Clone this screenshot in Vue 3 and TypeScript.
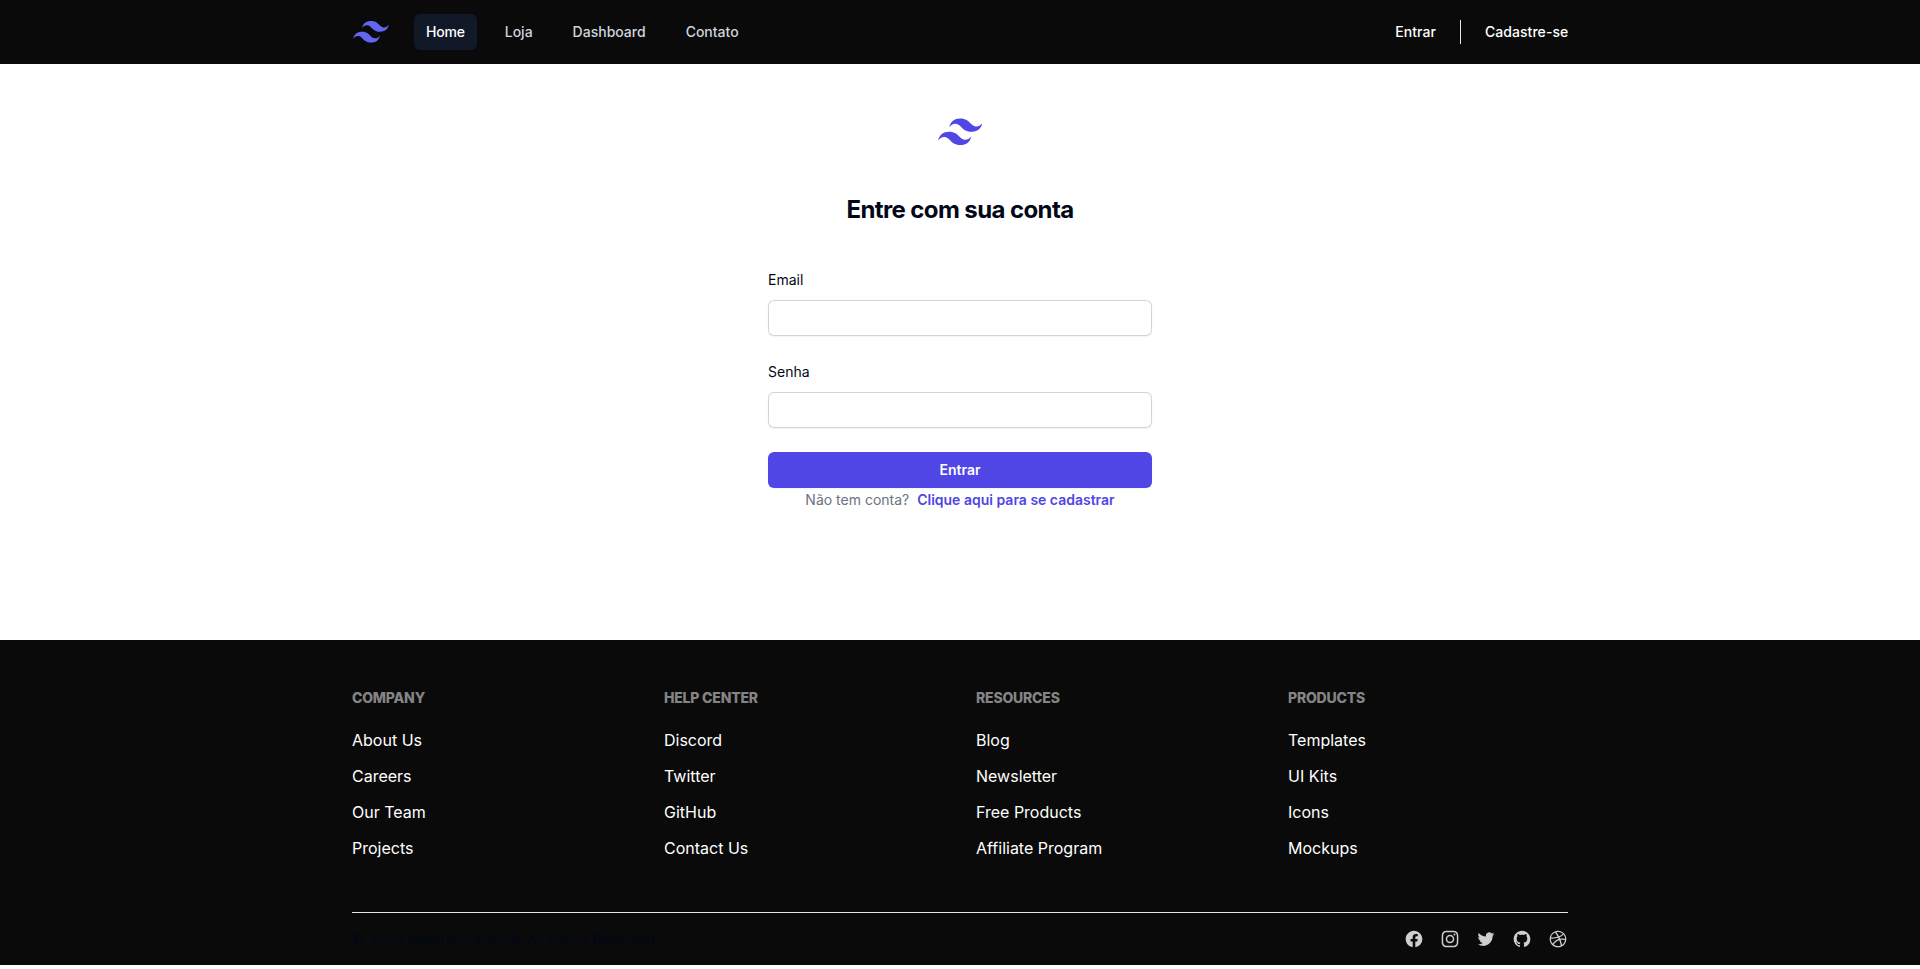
<script setup lang="ts">
interface NavItem { label: string; active?: boolean }
interface LinkGroup { title: string; items: string[] }
interface SocialIcon { name: string; path: string }

const navigation: NavItem[] = [
  { label: 'Home', active: true },
  { label: 'Loja' },
  { label: 'Dashboard' },
  { label: 'Contato' },
]

const groups: LinkGroup[] = [
  { title: 'Company', items: ['About Us', 'Careers', 'Our Team', 'Projects'] },
  { title: 'Help Center', items: ['Discord', 'Twitter', 'GitHub', 'Contact Us'] },
  { title: 'Resources', items: ['Blog', 'Newsletter', 'Free Products', 'Affiliate Program'] },
  { title: 'Products', items: ['Templates', 'UI Kits', 'Icons', 'Mockups'] },
]

const logoPath =
  'M27 0c-7.2 0-11.7 3.6-13.5 10.8 2.7-3.6 5.85-4.95 9.45-4.05 2.054.513 3.522 2.004 5.147 3.653C30.744 13.09 33.808 16.2 40.5 16.2c7.2 0 11.7-3.6 13.5-10.8-2.7 3.6-5.85 4.95-9.45 4.05-2.054-.513-3.522-2.004-5.147-3.653C36.756 3.11 33.692 0 27 0zM13.5 16.2C6.3 16.2 1.8 19.8 0 27c2.7-3.6 5.85-4.95 9.45-4.05 2.054.514 3.522 2.004 5.147 3.653C17.244 29.29 20.308 32.4 27 32.4c7.2 0 11.7-3.6 13.5-10.8-2.7 3.6-5.85 4.95-9.45 4.05-2.054-.513-3.522-2.004-5.147-3.653C23.256 19.31 20.192 16.2 13.5 16.2z'

const socials: SocialIcon[] = [
  {
    name: 'Facebook',
    path: 'M22 12c0-5.523-4.477-10-10-10S2 6.477 2 12c0 4.991 3.657 9.128 8.438 9.878v-6.987h-2.54V12h2.54V9.797c0-2.506 1.492-3.89 3.777-3.89 1.094 0 2.238.195 2.238.195v2.46h-1.26c-1.243 0-1.63.771-1.63 1.562V12h2.773l-.443 2.89h-2.33v6.988C18.343 21.128 22 16.991 22 12z',
  },
  {
    name: 'Instagram',
    path: 'M12.315 2c2.43 0 2.784.013 3.808.06 1.064.049 1.791.218 2.427.465a4.902 4.902 0 011.772 1.153 4.902 4.902 0 011.153 1.772c.247.636.416 1.363.465 2.427.048 1.067.06 1.407.06 4.123v.08c0 2.643-.012 2.987-.06 4.043-.049 1.064-.218 1.791-.465 2.427a4.902 4.902 0 01-1.153 1.772 4.902 4.902 0 01-1.772 1.153c-.636.247-1.363.416-2.427.465-1.067.048-1.407.06-4.123.06h-.08c-2.643 0-2.987-.012-4.043-.06-1.064-.049-1.791-.218-2.427-.465a4.902 4.902 0 01-1.772-1.153 4.902 4.902 0 01-1.153-1.772c-.247-.636-.416-1.363-.465-2.427-.047-1.024-.06-1.379-.06-3.808v-.63c0-2.43.013-2.784.06-3.808.049-1.064.218-1.791.465-2.427a4.902 4.902 0 011.153-1.772A4.902 4.902 0 015.45 2.525c.636-.247 1.363-.416 2.427-.465C8.901 2.013 9.256 2 11.685 2h.63zm-.081 1.802h-.468c-2.456 0-2.784.011-3.807.058-.975.045-1.504.207-1.857.344-.467.182-.8.398-1.15.748-.35.35-.566.683-.748 1.15-.137.353-.3.882-.344 1.857-.047 1.023-.058 1.351-.058 3.807v.468c0 2.456.011 2.784.058 3.807.045.975.207 1.504.344 1.857.182.466.399.8.748 1.15.35.35.683.566 1.15.748.353.137.882.3 1.857.344 1.054.048 1.37.058 4.041.058h.08c2.597 0 2.917-.01 3.96-.058.976-.045 1.505-.207 1.858-.344.466-.182.8-.398 1.15-.748.35-.35.566-.683.748-1.15.137-.353.3-.882.344-1.857.048-1.055.058-1.37.058-4.041v-.08c0-2.597-.01-2.917-.058-3.96-.045-.976-.207-1.505-.344-1.858a3.097 3.097 0 00-.748-1.15 3.098 3.098 0 00-1.15-.748c-.353-.137-.882-.3-1.857-.344-1.023-.047-1.351-.058-3.807-.058zM12 6.865a5.135 5.135 0 110 10.27 5.135 5.135 0 010-10.27zm0 1.802a3.333 3.333 0 100 6.666 3.333 3.333 0 000-6.666zm5.338-3.205a1.2 1.2 0 110 2.4 1.2 1.2 0 010-2.4z',
  },
  {
    name: 'Twitter',
    path: 'M8.29 20.251c7.547 0 11.675-6.253 11.675-11.675 0-.178 0-.355-.012-.53A8.348 8.348 0 0022 5.92a8.19 8.19 0 01-2.357.646 4.118 4.118 0 001.804-2.27 8.224 8.224 0 01-2.605.996 4.107 4.107 0 00-6.993 3.743 11.65 11.65 0 01-8.457-4.287 4.106 4.106 0 001.27 5.477A4.072 4.072 0 012.8 9.713v.052a4.105 4.105 0 003.292 4.022 4.095 4.095 0 01-1.853.07 4.108 4.108 0 003.834 2.85A8.233 8.233 0 012 18.407a11.616 11.616 0 006.29 1.84',
  },
  {
    name: 'GitHub',
    path: 'M12 2C6.477 2 2 6.484 2 12.017c0 4.425 2.865 8.18 6.839 9.504.5.092.682-.217.682-.483 0-.237-.008-.868-.013-1.703-2.782.605-3.369-1.343-3.369-1.343-.454-1.158-1.11-1.466-1.11-1.466-.908-.62.069-.608.069-.608 1.003.07 1.531 1.032 1.531 1.032.892 1.53 2.341 1.088 2.91.832.092-.647.35-1.088.636-1.338-2.22-.253-4.555-1.113-4.555-4.951 0-1.093.39-1.988 1.029-2.688-.103-.253-.446-1.272.098-2.65 0 0 .84-.27 2.75 1.026A9.564 9.564 0 0112 6.844c.85.004 1.705.115 2.504.337 1.909-1.296 2.747-1.027 2.747-1.027.546 1.379.202 2.398.1 2.651.64.7 1.028 1.595 1.028 2.688 0 3.848-2.339 4.695-4.566 4.943.359.309.678.92.678 1.855 0 1.338-.012 2.419-.012 2.747 0 .268.18.58.688.482A10.019 10.019 0 0022 12.017C22 6.484 17.522 2 12 2z',
  },
  {
    name: 'Dribbble',
    path: 'M12 2C6.48 2 2 6.48 2 12s4.48 10 10 10c5.51 0 10-4.48 10-10S17.51 2 12 2zm6.605 4.61a8.502 8.502 0 011.93 5.314c-.281-.054-3.101-.629-5.943-.271-.065-.141-.12-.293-.184-.445a25.416 25.416 0 00-.564-1.236c3.145-1.28 4.577-3.124 4.761-3.362zM12 3.475c2.17 0 4.154.813 5.662 2.148-.152.216-1.443 1.941-4.48 3.08-1.399-2.57-2.95-4.675-3.189-5A8.687 8.687 0 0112 3.475zm-3.633.803a53.896 53.896 0 013.167 4.935c-3.992 1.063-7.517 1.04-7.896 1.04a8.581 8.581 0 014.729-5.975zM3.453 12.01v-.26c.37.01 4.512.065 8.775-1.215.25.477.477.965.694 1.453-.109.033-.228.065-.336.098-4.404 1.42-6.747 5.303-6.942 5.629a8.522 8.522 0 01-2.19-5.705zM12 20.547a8.482 8.482 0 01-5.239-1.8c.152-.315 1.888-3.656 6.703-5.337.022-.01.033-.01.054-.022a35.318 35.318 0 011.823 6.475 8.4 8.4 0 01-3.341.684zm4.761-1.465c-.086-.52-.542-3.015-1.659-6.084 2.679-.423 5.022.271 5.314.369a8.468 8.468 0 01-3.655 5.715z',
  },
]
</script>

<template>
  <div class="page">
    <header class="navbar">
      <div class="container navbar-inner">
        <div class="nav-left">
          <svg class="nav-logo" viewBox="0 0 54 33" aria-hidden="true"><path :d="logoPath" /></svg>
          <nav class="nav-links">
            <a
              v-for="item in navigation"
              :key="item.label"
              class="nav-link"
              :class="{ active: item.active }"
            >{{ item.label }}</a>
          </nav>
        </div>
        <div class="nav-auth">
          <a>Entrar</a>
          <span class="separator"></span>
          <a class="register">Cadastre-se</a>
        </div>
      </div>
    </header>

    <main class="login">
      <svg class="login-logo" viewBox="0 0 54 33" aria-hidden="true"><path :d="logoPath" /></svg>
      <h2 class="login-title">Entre com sua conta</h2>
      <form class="login-form" @submit.prevent>
        <div class="field">
          <label for="email">Email</label>
          <input id="email" type="email" autocomplete="email" />
        </div>
        <div class="field">
          <label for="password">Senha</label>
          <input id="password" type="password" autocomplete="current-password" />
        </div>
        <button type="submit">Entrar</button>
      </form>
      <p class="signup">Não tem conta? <a>Clique aqui para se cadastrar</a></p>
    </main>

    <footer class="footer">
      <div class="container">
        <div class="link-groups">
          <section v-for="group in groups" :key="group.title">
            <h6>{{ group.title }}</h6>
            <ul>
              <li v-for="item in group.items" :key="item"><a>{{ item }}</a></li>
            </ul>
          </section>
        </div>
        <div class="bottom">
          <p>© 2023 Material Tailwind. All Rights Reserved.</p>
          <div class="socials">
            <svg v-for="icon in socials" :key="icon.name" viewBox="0 0 24 24" :aria-label="icon.name">
              <path fill-rule="evenodd" clip-rule="evenodd" :d="icon.path" />
            </svg>
          </div>
        </div>
      </div>
    </footer>
  </div>
</template>

<style>
body {
  background: #fff;
}
</style>

<style scoped>
* {
  box-sizing: border-box;
  margin: 0;
}
.page {
  font-family: Inter, "Noto Sans", sans-serif;
  font-size: 16px;
  line-height: 24px;
  color: #020817;
}
.container {
  width: 1216px;
  margin: 0 auto;
}
.navbar {
  height: 64px;
  background: #0a0a0a;
  font-size: 14px;
  line-height: 20px;
  font-weight: 500;
}
.navbar-inner,
.nav-left,
.nav-links,
.nav-auth {
  display: flex;
  align-items: center;
}
.navbar-inner {
  height: 64px;
  justify-content: space-between;
}
.nav-left {
  gap: 24px;
}
.nav-logo {
  display: block;
  width: 38px;
  height: 22px;
  fill: #6366f1;
}
.nav-links {
  gap: 16px;
}
.nav-link {
  padding: 8px 12px;
  border-radius: 6px;
  color: #d1d5db;
}
.nav-link.active {
  background: #111827;
  color: #fff;
  letter-spacing: -0.2px;
}
.nav-auth {
  gap: 24px;
  color: #fff;
  letter-spacing: 0.05px;
}
.register {
  width: 83px;
  white-space: nowrap;
}
.separator {
  width: 1px;
  height: 24px;
  background: #e5e7eb;
}
.login {
  height: 576px;
  padding-top: 48px;
  display: flex;
  flex-direction: column;
  align-items: center;
}
.login-logo {
  width: 44.5px;
  height: 40px;
  fill: #4f46e5;
}
.login-title {
  margin-top: 40px;
  font-size: 24px;
  line-height: 36px;
  font-weight: 700;
  letter-spacing: -0.6px;
}
.login-form {
  width: 384px;
  margin-top: 40px;
  display: flex;
  flex-direction: column;
  gap: 24px;
}
.field {
  display: flex;
  flex-direction: column;
  gap: 8px;
}
label {
  font-size: 14px;
  line-height: 24px;
}
input {
  height: 36px;
  width: 100%;
  padding: 6px 12px;
  border: 0;
  border-radius: 6px;
  outline: none;
  background: #fff;
  font: inherit;
  box-shadow: inset 0 0 0 1px #d1d5db, 0 1px 2px rgba(0, 0, 0, 0.05);
}
button {
  height: 36px;
  border: 0;
  border-radius: 6px;
  background: #4f46e5;
  color: #fff;
  font: 600 14px/24px Inter, "Noto Sans", sans-serif;
  box-shadow: 0 1px 2px rgba(0, 0, 0, 0.05);
}
.signup {
  font-size: 14px;
  line-height: 24px;
  color: #6b7280;
}
.signup a {
  margin-left: 4px;
  font-weight: 600;
  color: #4f46e5;
}
.footer {
  height: 325px;
  padding-top: 48px;
  background: #0a0a0a;
}
.link-groups {
  height: 224px;
  display: grid;
  grid-template-columns: repeat(4, 1fr);
  column-gap: 32px;
}
h6 {
  margin-bottom: 14px;
  font-size: 14px;
  line-height: 20px;
  font-weight: 800;
  letter-spacing: -0.2px;
  text-transform: uppercase;
  color: #848484;
}
ul {
  padding: 0;
  list-style: none;
}
li {
  height: 36px;
  display: flex;
  align-items: center;
  color: #fff;
}
.bottom {
  padding: 14px 0;
  border-top: 1px solid #e5e7eb;
  display: flex;
  align-items: center;
  justify-content: space-between;
}
.bottom p {
  font-size: 14px;
  line-height: 24px;
}
.socials {
  display: flex;
  gap: 16px;
}
.socials svg {
  width: 20px;
  height: 20px;
  fill: #cecece;
}
</style>
